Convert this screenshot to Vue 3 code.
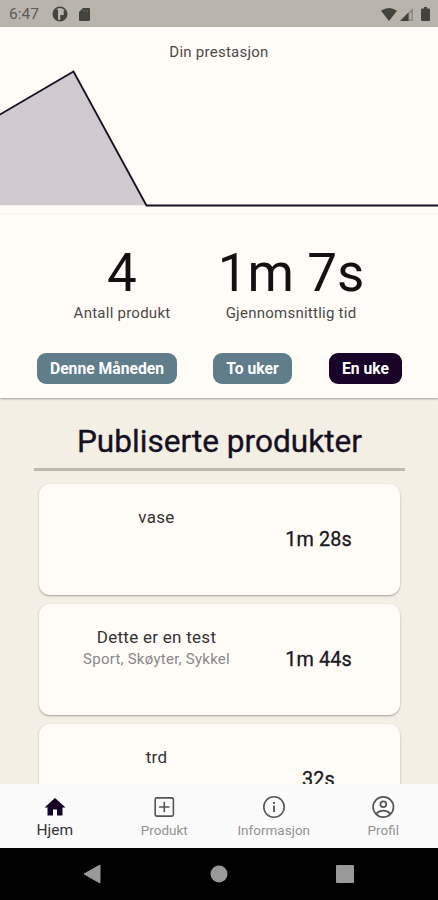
<script setup>
const stats = [
  { key: 'count', value: '4', label: 'Antall produkt' },
  { key: 'average', value: '1m 7s', label: 'Gjennomsnittlig tid' },
]
const periods = [
  { key: 'month', label: 'Denne Måneden', active: false },
  { key: 'two', label: 'To uker', active: false },
  { key: 'one', label: 'En uke', active: true },
]
const products = [
  { name: 'vase', tags: '', time: '1m 28s' },
  { name: 'Dette er en test', tags: 'Sport, Skøyter, Sykkel', time: '1m 44s' },
  { name: 'trd', tags: '', time: '32s' },
]
</script>

<template>
  <div class="phone">
    <header class="status">
      <span class="clock">6:47</span>
      <svg class="app-icon" width="16" height="16" viewBox="0 0 16 16">
        <circle cx="8" cy="8" r="6.7" fill="#b8b4ac" stroke="#42423e" stroke-width="1.6" />
        <path d="M3 3.5H6V14Q1.5 12 1.3 8Q1.5 5 3 3.500Z" fill="#42423e" />
        <path d="M8 4.200H11.400V8.800H8Z" fill="#b8b4ac" />
        <path d="M8.300 9H11.700V4.300L14 5V10L11 13.800L8.300 14.500Z" fill="#42423e" />
      </svg>
      <svg class="card-icon" width="11" height="13" viewBox="0 0 11 13">
        <path d="M4 0H10Q11 0 11 1V12Q11 13 10 13H1Q0 13 0 12V4Z" fill="#42423e" />
        <path d="M4.500 1.800V4M6.500 1.800V4M8.500 1.800V4" stroke="#66645f" stroke-width="0.8" />
      </svg>
      <span class="spacer"></span>
      <svg width="16" height="13" viewBox="0 0 16 13">
        <path d="M0 2.800Q8 -2.600 16 2.800L8 13Z" fill="#42423e" />
      </svg>
      <svg class="signal" width="13" height="13" viewBox="0 0 13 13">
        <path d="M13 0V13H0Z" fill="#8d8a83" />
        <path d="M8.500 4.500V13H0Z" fill="#42423e" />
        <path d="M9.500 5H11.500V11.500H9.500Z" fill="#b8b4ac" />
      </svg>
      <svg class="battery" width="9" height="14" viewBox="0 0 9 14">
        <path d="M3 0H6V1.400H8Q9 1.400 9 2.400V13Q9 14 8 14H1Q0 14 0 13V2.400Q0 1.400 1 1.400H3Z" fill="#42423e" />
      </svg>
    </header>

    <section class="panel">
      <h2 class="chart-title">Din prestasjon</h2>
      <svg class="chart" width="438" height="150" viewBox="0 0 438 150">
        <path d="M0 49.500L73.500 6.500L146.500 140.300H0Z" fill="#d0c9d0" />
        <path d="M-2 50.700L73.500 6.500L146.500 140.500H440" fill="none" stroke="#15101f" stroke-width="1.8" />
        <path d="M0 149H438" stroke="#f7f3f2" stroke-width="1" />
      </svg>
      <div class="stats">
        <div v-for="s in stats" :key="s.key" class="stat" :class="s.key">
          <strong class="value">{{ s.value }}</strong>
          <span class="label">{{ s.label }}</span>
        </div>
      </div>
      <div class="periods">
        <button v-for="p in periods" :key="p.key" class="period" :class="[p.key, { active: p.active }]">{{ p.label }}</button>
      </div>
    </section>

    <main class="products">
      <h1 class="heading"><span>Publiserte produkter</span></h1>
      <article v-for="p in products" :key="p.name" class="card">
        <div class="info">
          <span class="name">{{ p.name }}</span>
          <span v-if="p.tags" class="tags">{{ p.tags }}</span>
        </div>
        <span class="time">{{ p.time }}</span>
      </article>
    </main>

    <nav class="tabs">
      <a class="tab active">
        <svg width="24" height="24" viewBox="0 0 24 24"><path d="M10 20.500V14.500H14V20.500H19.500V12.500H22.500L12 3L1.500 12.500H4.500V20.500Z" fill="#160426" /></svg>
        <span>Hjem</span>
      </a>
      <a class="tab">
        <svg width="24" height="24" viewBox="0 0 24 24" fill="none" stroke="#555" stroke-width="1.600">
          <rect x="3.200" y="2.900" width="18.200" height="18.200" rx="1.500" /><path d="M12.300 6.800V17.200M7.100 12H17.500" />
        </svg>
        <span>Produkt</span>
      </a>
      <a class="tab">
        <svg width="24" height="24" viewBox="0 0 24 24" fill="none" stroke="#555" stroke-width="1.600">
          <circle cx="12" cy="12" r="10.200" /><path d="M12 10.600V17M12 7V8.900" stroke-width="1.800" />
        </svg>
        <span>Informasjon</span>
      </a>
      <a class="tab">
        <svg width="24" height="24" viewBox="0 0 24 24" fill="none" stroke="#555" stroke-width="1.700">
          <circle cx="12.300" cy="12" r="10.200" /><circle cx="12.300" cy="9.200" r="2.900" />
          <path d="M5.300 18.600Q8.300 15.600 12.300 15.600T19.300 18.600" />
        </svg>
        <span>Profil</span>
      </a>
    </nav>

    <footer class="system">
      <svg width="18" height="20" viewBox="0 0 18 20"><path d="M17 1V19L1 10Z" fill="#999" stroke="#999" stroke-linejoin="round" /></svg>
      <svg width="18" height="20" viewBox="0 0 18 20"><circle cx="9" cy="10" r="8.500" fill="#999" /></svg>
      <svg width="18" height="20" viewBox="0 0 18 20"><rect y="1" width="18" height="18" rx="1" fill="#999" /></svg>
    </footer>
  </div>
</template>

<style>
body { margin: 0; overflow: hidden; }
</style>

<style scoped>
.phone {
  width: 438px;
  height: 900px;
  display: flex;
  flex-direction: column;
  overflow: hidden;
  background: #f4efe5;
  font-family: Roboto, "Liberation Sans", sans-serif;
  color: #111;
}
.status {
  flex: none;
  height: 27px;
  box-sizing: border-box;
  padding: 1px 8px 0 9px;
  display: flex;
  align-items: center;
  background: #b8b4ac;
}
.clock { width: 43px; font-size: 15.500px; color: #5d5b57; }
.card-icon { margin-left: 11px; }
.spacer { flex: 1; }
.signal { margin-left: 3px; }
.battery { margin-left: 8px; }
.panel {
  flex: none;
  height: 371px;
  background: #fffcf8;
  box-shadow: 0 1px 2px rgba(0, 0, 0, 0.35);
  position: relative;
  display: flex;
  flex-direction: column;
}
.chart-title {
  margin: 0;
  padding-top: 15px;
  height: 23px;
  line-height: 20px;
  text-align: center;
  font-size: 15px;
  font-weight: 400;
  letter-spacing: 0.25px;
  color: #4a4948;
}
.chart { flex: none; display: block; }
.stats { display: flex; padding-top: 27px; }
.stat { display: flex; flex-direction: column; align-items: center; }
.stat.count { width: 244px; }
.stat.average { width: 94px; }
.value { font-size: 53px; line-height: 62px; font-weight: 400; white-space: nowrap; }
.label { font-size: 15px; line-height: 18px; letter-spacing: 0.25px; white-space: nowrap; color: #4a4948; }
.periods { display: flex; justify-content: space-between; padding: 31px 36px 0 37px; }
.period {
  height: 31px;
  border: 0;
  border-radius: 9px;
  padding: 0;
  background: #5f7d8b;
  color: #fff;
  font: 700 15.700px/31px Roboto, "Liberation Sans", sans-serif;
}
.period.month { width: 140px; }
.period.two { width: 79px; margin-right: 1px; }
.period.one { width: 73px; }
.period.active { background: #190329; }
.products {
  flex: 1;
  min-height: 0;
  overflow: hidden;
  padding: 25px 34px 0;
  display: flex;
  flex-direction: column;
}
.heading {
  flex: none;
  margin: 0 -1px 13px 0;
  height: 45px;
  border-bottom: 3px solid #bfb8ae;
  font-size: 31.600px;
  line-height: 38px;
  font-weight: 400;
  -webkit-text-stroke: 0.35px #15101f;
  text-align: center;
  color: #15101f;
}
.card {
  flex: none;
  height: 111px;
  margin: 0 4px 9px 5px;
  display: flex;
  border-radius: 11px;
  background: #fffcf8;
  box-shadow: 0 1px 2px rgba(90, 80, 65, 0.5);
}
.info { width: 235px; display: flex; flex-direction: column; align-items: center; padding-top: 22px; }
.name { font-size: 17px; line-height: 22px; letter-spacing: 0.28px; color: #333; }
.tags { font-size: 15px; line-height: 23px; color: #888; letter-spacing: 0.25px; }
.time {
  width: 89px;
  line-height: 111px;
  text-align: center;
  font-size: 19.800px;
  font-weight: 400;
  letter-spacing: 0.15px;
  -webkit-text-stroke: 0.3px #1b1820;
  color: #1b1820;
}
.tabs {
  flex: none;
  height: 64px;
  box-sizing: border-box;
  padding-top: 11px;
  display: grid;
  grid-template-columns: repeat(4, 1fr);
  background: #fbfbfb;
}
.tab { display: flex; flex-direction: column; align-items: center; font-size: 13.500px; line-height: 23px; color: #929292; }
.tab svg { flex: none; }
.tab.active { font-size: 15.500px; color: #333; }
.system {
  flex: none;
  height: 52px;
  box-sizing: border-box;
  padding: 0 84px 0 83px;
  display: flex;
  align-items: center;
  justify-content: space-between;
  background: #000;
}
</style>
